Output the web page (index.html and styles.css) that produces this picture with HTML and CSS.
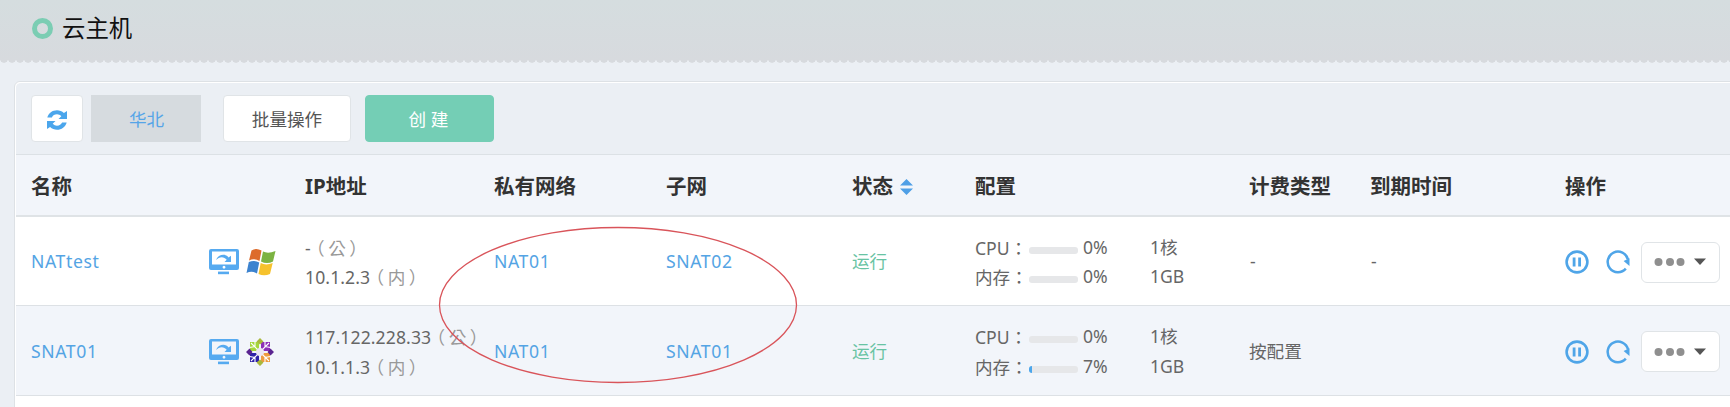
FILE: index.html
```html
<!DOCTYPE html>
<html lang="zh-CN">
<head>
<meta charset="utf-8">
<title>云主机</title>
<link rel="stylesheet" href="styles.css">
</head>
<body>
<svg class="defs" width="0" height="0">
  <defs>
    <symbol id="monitor" viewBox="0 0 30 26">
      <path fill-rule="evenodd" d="M2 0h26q2 0 2 2v17q0 2-2 2H2q-2 0-2-2V2q0-2 2-2zM3 2.500v13h24v-13zM15 16.800a1.400 1.400 0 1 0 .01 0z"/>
      <rect x="9" y="22.600" width="11" height="2.600"/>
      <path d="M7 11C9 5 17 4 19.500 8.500L22 6.800V13H15.500L17.700 10.800C15 7 10 7.500 7 11z"/>
    </symbol>
    <symbol id="pause" viewBox="0 0 24 24">
      <circle cx="12" cy="12" r="10.400" fill="none" stroke="currentColor" stroke-width="2.600"/>
      <path d="M7.700 7.500h2.800v9H7.700zM13.200 7.500H16v9h-2.800z"/>
    </symbol>
    <symbol id="restart" viewBox="0 0 24 24">
      <path fill="none" stroke="currentColor" stroke-width="2.500" d="M19.800 18.600A10.300 10.300 0 1 1 22 9.500"/>
      <path d="M17.600 11L23.500 8.200V16z"/>
    </symbol>
    <symbol id="dots" viewBox="0 0 54 10">
      <g fill="#8f8f8f"><circle cx="4.500" cy="5" r="4"/><circle cx="16" cy="5" r="4"/><circle cx="26.500" cy="5" r="4"/></g>
      <path fill="#555" d="M40 1.500h12L46 8z"/>
    </symbol>
  </defs>
</svg>
<header class="page-head"><span class="ring"></span><h1>云主机</h1></header>
<main class="panel">
  <div class="toolbar">
    <button class="btn refresh" aria-label="刷新"><svg width="22" height="22" viewBox="0 0 22 22"><path d="M1.300 8.500C2.500 4 6.500 1.200 11 1.200c2.600 0 5 1 6.900 2.800L21 2v8h-8.500l2.800-2.800C14 6 12.600 5.300 11 5.300c-2.400 0-4.200 1.200-5.100 3.200z"/><path d="M20.700 13.500C19.500 18 15.500 20.800 11 20.800c-2.600 0-5-1-6.900-2.800L1 20v-8h8.500l-2.800 2.800c1.300 1.200 2.700 1.900 4.300 1.900 2.400 0 4.200-1.200 5.100-3.200z"/></svg></button>
    <button class="btn region">华北</button>
    <button class="btn batch">批量操作</button>
    <button class="btn create">创 建</button>
  </div>
  <div class="row head">
    <div class="wide">名称</div><div>IP地址</div><div>私有网络</div><div>子网</div>
    <div class="sort">状态<svg width="13" height="16" viewBox="0 0 13 16"><path d="M0 6.500L6.500 0L13 6.500zM0 9.500L6.500 16L13 9.500z"/></svg></div>
    <div>配置</div><div>计费类型</div><div>到期时间</div><div>操作</div>
  </div>
  <div class="row">
    <div class="link">NATtest</div>
    <div class="icons"><svg class="mon"><use href="#monitor"/></svg><svg width="30" height="28" viewBox="0 0 30 28"><path fill="#dd6b2b" d="M5.500 2.500Q10-.5 15.500 2.500L13.500 13Q8.500 10 3 12.500z"/><path fill="#7cb342" d="M17 3.500Q22 6 29.500 3L27 13.500Q21 16.500 15 13.500z"/><path fill="#3c83cf" d="M2.800 14Q8.500 11.800 13.200 14.500L11 25.500Q6 22.500.5 25z"/><path fill="#f6c22d" d="M14.700 15Q20 17.800 26.700 15L24 26Q18 28.500 12.500 26z"/></svg></div>
    <div class="lines"><p>-<i lang="zh-TW">（公）</i></p><p>10.1.2.3<i lang="zh-TW">（内）</i></p></div>
    <div class="link">NAT01</div><div class="link">SNAT02</div><div class="run">运行</div>
    <div class="config"><span>CPU<b lang="zh-TW">：</b></span><span class="bar"></span><span>0%</span><span>1核</span><span>内存<b lang="zh-TW">：</b></span><span class="bar"></span><span>0%</span><span>1GB</span></div>
    <div class="dash">-</div><div class="dash">-</div>
    <div class="ops"><svg class="op"><use href="#pause"/></svg><svg class="op"><use href="#restart"/></svg><button class="btn more" aria-label="更多"><svg width="54" height="10"><use href="#dots"/></svg></button></div>
  </div>
  <div class="row alt">
    <div class="link">SNAT01</div>
    <div class="icons"><svg class="mon"><use href="#monitor"/></svg><svg width="28" height="28" viewBox="0 0 28 28"><path fill="#a5d63a" d="M4 4h9v7l-2 2H4z"/><path fill="#8d2fb8" d="M15 4h9v9h-7l-2-2z"/><path fill="#2f22a8" d="M4 15h7l2 2v7H4z"/><path fill="#ee9b3e" d="M17 15h7v9h-9v-7z"/><path fill="#a9b83c" d="M10.500 3.500L14 0l3.500 3.500-3.500 3zM10.500 24.500L14 28l3.500-3.500-3.500-3z"/><path fill="#5a2390" d="M3.500 10.500L0 14l3.500 3.500 3-3.500zM24.500 10.500L28 14l-3.500 3.500-3-3.500z"/><path fill="none" stroke="#fff" stroke-width="1.100" d="M5 5l18 18M23 5L5 23M9 3.500v5l-5.500 1M19 3.500v5l5.500 1M9 24.500v-5l-5.500-1M19 24.500v-5l5.500-1"/><circle cx="14" cy="14" r="4" fill="#ece6f2"/></svg></div>
    <div class="lines"><p>117.122.228.33<i lang="zh-TW">（公）</i></p><p>10.1.1.3<i lang="zh-TW">（内）</i></p></div>
    <div class="link">NAT01</div><div class="link">SNAT01</div><div class="run">运行</div>
    <div class="config"><span>CPU<b lang="zh-TW">：</b></span><span class="bar"></span><span>0%</span><span>1核</span><span>内存<b lang="zh-TW">：</b></span><span class="bar"><span class="fill" style="width:7%"></span></span><span>7%</span><span>1GB</span></div>
    <div>按配置</div><div></div>
    <div class="ops"><svg class="op"><use href="#pause"/></svg><svg class="op"><use href="#restart"/></svg><button class="btn more" aria-label="更多"><svg width="54" height="10"><use href="#dots"/></svg></button></div>
  </div>
</main>
<svg class="annotation" width="360" height="158" viewBox="0 0 360 158"><ellipse cx="180" cy="79" rx="178.500" ry="77.500"/></svg>
</body>
</html>
```
FILE: styles.css
```css
* { box-sizing: border-box; margin: 0; padding: 0; }
html, body { width: 100%; height: 407px; overflow: hidden; }
body {
  position: relative;
  background: #ebeff4;
  color: #666;
  font: 17.6px/29.5px "Noto Sans", "Noto Sans CJK SC", sans-serif;
}
svg { display: block; fill: currentColor; flex: none; }
.defs { position: absolute; }
.page-head {
  position: relative;
  display: flex;
  align-items: center;
  height: 62px;
  padding: 0 0 6px 32px;
  gap: 9px;
  background: linear-gradient(#d5dddf, #d7dade);
}
.page-head::after {
  content: "";
  position: absolute;
  left: 0; right: 0; top: 60px;
  height: 4px;
  background: radial-gradient(ellipse 4px 3px at 50% 0, #d7dade 80%, #ebeff4 100%) 0 0 / 8px 4px repeat-x;
}
.ring { width: 21px; height: 21px; border: 5px solid #7bcdb3; border-radius: 50%; }
h1 { font-size: 23.4px; font-weight: 400; line-height: 36px; color: #111; }
.panel {
  margin: 19px 0 0 14px;
  width: 1730px;
  height: 340px;
  border: 1px solid #dde1e5;
  border-radius: 6px 0 0 0;
  box-shadow: inset 2px 2px 0 #fff;
  background: #fff;
  padding-left: 1px;
}
.toolbar {
  display: flex;
  height: 73px;
  padding: 12px 0 0 15px;
  background: #ebeff4;
  border-top: 1px solid #fff;
  border-bottom: 1px solid #dce1e5;
  border-radius: 5px 0 0 0;
}
.btn {
  display: flex;
  align-items: center;
  justify-content: center;
  height: 47px;
  padding-top: 2px;
  border: 1px solid #e0e4e7;
  border-radius: 4px;
  background: #fff;
  color: #555;
  font: inherit;
}
.refresh { width: 52px; color: #4ba6ec; }
.region { width: 110px; margin-left: 8px; padding-left: 1px; background: #d6dbdf; border-color: #d6dbdf; border-radius: 0; color: #56a5e8; }
.batch { width: 128px; margin-left: 22px; }
.create { width: 129px; margin-left: 14px; padding-right: 2px; background: #74ceb5; border-color: #74ceb5; color: #fff; }
.row {
  display: grid;
  grid-template-columns: 178px 96px 189px 172px 186px 123px 274px 121px 195px 180px;
  align-items: center;
  height: 89px;
  padding: 2px 0 0 15px;
  border-bottom: 1px solid #dde1e5;
  white-space: nowrap;
}
.head { height: 62px; padding-top: 4px; background: #f2f5fa; font-size: 20.5px; font-weight: 700; color: #333; border-bottom: 2px solid #dfe3e6; }
.alt { background: #f2f5fa; height: 90px; }
.wide { grid-column: span 2; }
.sort { display: flex; align-items: center; gap: 7px; }
.sort svg { color: #4f9fe6; }
.link { color: #54a4e4; letter-spacing: .6px; }
.run { color: #68c3a3; }
.dash { padding-left: 1px; }
.icons { display: flex; align-items: center; gap: 7px; color: #56aaf0; }
.mon { width: 30px; height: 26px; }
.lines p { height: 29.5px; letter-spacing: .1px; }
.lines i {
  margin-left: 5px;
  font-family: "Noto Sans CJK TC", sans-serif;
  font-style: normal;
  font-feature-settings: "halt";
  letter-spacing: 3.6px;
  color: #999;
}
.config { display: grid; grid-template-columns: 54px 54px 67px 60px; grid-auto-rows: 29.5px; }
.config b { font-family: "Noto Sans CJK TC", sans-serif; font-weight: 400; }
.bar { display: block; width: 49px; height: 7px; margin-top: 14px; border-radius: 3px; background: #e6e7e9; overflow: hidden; }
.fill { display: block; height: 100%; background: #4ba6ec; }
.ops { display: flex; align-items: center; color: #4fa5e8; }
.op { width: 24px; height: 24px; margin-right: 17px; }
.more { width: 79px; height: 41px; padding: 0; border-radius: 6px; margin-left: -6px; }
.annotation { position: absolute; left: 438px; top: 226px; fill: none; stroke: #d9545a; stroke-width: 1.3; }
```
